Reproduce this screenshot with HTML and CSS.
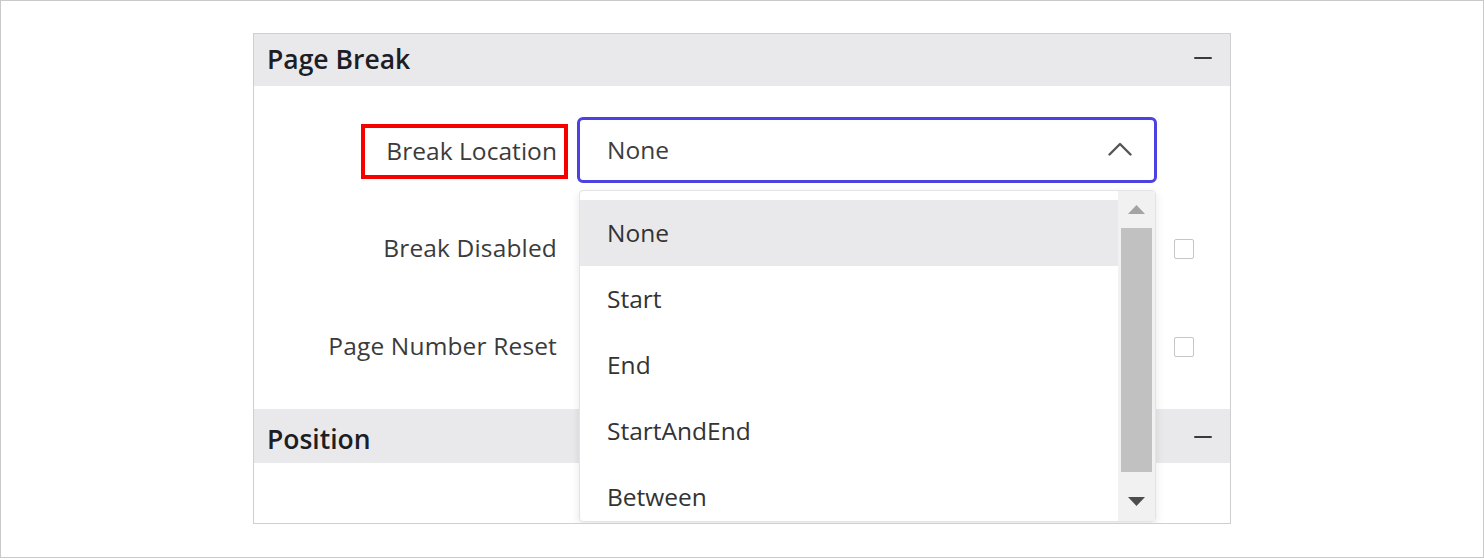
FILE: index.html
```html
<!DOCTYPE html>
<html lang="en">
<head>
<meta charset="utf-8">
<title>Page Break</title>
<link rel="stylesheet" href="styles.css">
</head>
<body>
<div class="frame">
  <section class="panel">
    <div class="panel-head">
      <span class="panel-title">Page Break</span>
      <span class="collapse" aria-label="Collapse"></span>
    </div>
    <div class="panel-body">
      <div class="row">
        <div class="label-cell"><span class="label label-marked">Break Location</span></div>
        <div class="value-cell">
          <div class="select-wrap">
            <div class="select">
              <span class="select-value">None</span>
              <svg class="chevron" width="24" height="14" viewBox="0 0 24 14"><polyline points="1.5,12.5 12,2 22.5,12.5" fill="none" stroke="#555" stroke-width="2.4" stroke-linecap="round" stroke-linejoin="round"/></svg>
            </div>
            <div class="popup">
              <ul class="options">
                <li class="option option-active">None</li>
                <li class="option">Start</li>
                <li class="option">End</li>
                <li class="option">StartAndEnd</li>
                <li class="option">Between</li>
              </ul>
              <div class="scrollbar">
                <div class="scroll-btn">
                  <svg width="17" height="9" viewBox="0 0 17 9"><polygon points="8.5,0 17,9 0,9" fill="#a3a3a3"/></svg>
                </div>
                <div class="scroll-thumb"></div>
                <div class="scroll-space"></div>
                <div class="scroll-btn">
                  <svg width="17" height="9" viewBox="0 0 17 9"><polygon points="0,0 17,0 8.5,9" fill="#4d4d4d"/></svg>
                </div>
              </div>
            </div>
          </div>
        </div>
      </div>
      <div class="row">
        <div class="label-cell"><span class="label">Break Disabled</span></div>
        <div class="value-cell value-check"><span class="checkbox"></span></div>
      </div>
      <div class="row">
        <div class="label-cell"><span class="label">Page Number Reset</span></div>
        <div class="value-cell value-check"><span class="checkbox"></span></div>
      </div>
    </div>
    <div class="panel-head panel-head-second">
      <span class="panel-title">Position</span>
      <span class="collapse" aria-label="Collapse"></span>
    </div>
    <div class="panel-body panel-body-empty"></div>
  </section>
</div>
</body>
</html>
```

FILE: styles.css
```css
* { box-sizing: border-box; }
html, body { margin: 0; padding: 0; background: #fff; }
body { font-family: "Open Sans", "Noto Sans", "Liberation Sans", sans-serif; }

.frame {
  width: 1484px;
  height: 558px;
  border: 1px solid #c9c9c9;
  padding: 32px 0 0 252px;
}

.panel {
  width: 978px;
  height: 491px;
  border: 1px solid #cfcfcf;
  overflow: hidden;
  background: #fff;
}

.panel-head {
  height: 52px;
  background: #e9e9ec;
  display: flex;
  align-items: center;
  justify-content: space-between;
  padding: 0 18px 0 13px;
}
.panel-head-second { height: 54px; }

.panel-title {
  font-size: 26.5px;
  font-weight: 600;
  color: #1d1d26;
  line-height: 1;
  margin-top: -2px;
}
.panel-head-second .panel-title { margin-top: 7px; }

.collapse {
  width: 18px;
  height: 2px;
  background: #3a3a3a;
  border-radius: 1px;
  margin-top: -4px;
}
.panel-head-second .collapse { margin-top: 2px; }

.panel-body {
  padding: 31px 0 30px;
  display: flex;
  flex-direction: column;
  gap: 32px;
}
.panel-body-empty { padding: 0; }

.row {
  display: grid;
  grid-template-columns: 303px 617px;
  column-gap: 20px;
  height: 66px;
  align-items: center;
}

.label-cell {
  display: flex;
  justify-content: flex-end;
  align-items: center;
}

.label {
  font-size: 24.5px;
  color: #3b3b3b;
  line-height: 1;
  white-space: nowrap;
  letter-spacing: 0.15px;
}

.label-marked {
  border: 4px solid #f60000;
  height: 55px;
  display: flex;
  align-items: center;
  padding: 0 7px 0 21px;
  margin-right: -11px;
  margin-top: 3px;
  letter-spacing: 0.05px;
}

.value-cell { height: 66px; }
.value-check {
  display: flex;
  justify-content: flex-end;
  align-items: center;
}

.select-wrap {
  position: relative;
  width: 580px;
  height: 66px;
}

.select {
  height: 66px;
  border: 3px solid #4c42e2;
  border-radius: 6px;
  display: flex;
  align-items: center;
  justify-content: space-between;
  padding: 0 22px 0 27px;
  background: #fff;
}

.select-value {
  font-size: 24.5px;
  color: #3d3d3d;
  line-height: 1;
}

.chevron { display: block; margin-top: -2px; }

.popup {
  position: absolute;
  top: 73px;
  left: 2px;
  width: 577px;
  height: 332px;
  background: #fff;
  border: 1px solid #e4e4e6;
  border-radius: 4px;
  box-shadow: 0 3px 8px rgba(0, 0, 0, 0.10);
  display: flex;
  z-index: 5;
}

.options {
  list-style: none;
  margin: 0;
  padding: 9px 0 0;
  flex: 1;
}

.option {
  height: 66px;
  display: flex;
  align-items: center;
  padding-left: 27px;
  font-size: 24.5px;
  color: #333;
  line-height: 1;
}
.option-active { background: #e9e9ec; }

.scrollbar {
  width: 37px;
  background: #f1f1f2;
  display: flex;
  flex-direction: column;
  padding: 0 3px;
}

.scroll-btn {
  height: 37px;
  display: flex;
  align-items: center;
  justify-content: center;
}
.scroll-btn svg { display: block; }

.scroll-thumb {
  height: 244px;
  background: #c1c1c1;
}

.scroll-space { height: 11px; }

.checkbox {
  width: 20px;
  height: 20px;
  border: 1px solid #c6c6c6;
  border-radius: 2px;
  background: #fff;
  margin-top: 2px;
}
```
